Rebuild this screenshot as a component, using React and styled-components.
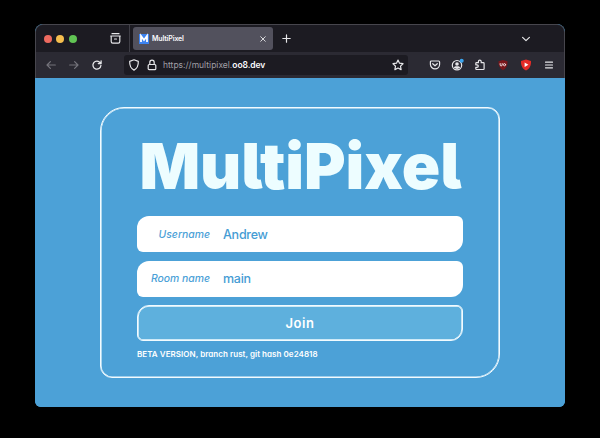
import React from "react";
import styled, { createGlobalStyle } from "styled-components";

const Global = createGlobalStyle`
  * { box-sizing: border-box; }
  html, body { margin: 0; background: #000; }
  body { font-family: Inter, "Liberation Sans", sans-serif; overflow: hidden; }
`;

const Desktop = styled.div`
  width: 600px;
  height: 438px;
  padding: 24px 35px 31px;
  background: #000;
`;
const Window = styled.div`
  height: 383px;
  border-radius: 8px 8px 6px 6px;
  overflow: hidden;
  display: flex;
  flex-direction: column;
  background: #4ca1d7;
`;
const Chrome = styled.div`
  height: 54px;
  border: 1px solid #47464d;
  border-bottom: 0;
  border-radius: 8px 8px 0 0;
  background: #2b2a33;
  overflow: hidden;
  color: #e8e8ea;
`;
const TabBar = styled.div`
  height: 27px;
  display: flex;
  align-items: center;
  background: #1c1b22;
  padding-left: 7.5px;
`;
const Lights = styled.div`
  display: flex;
  gap: 4.8px;
  margin-right: 32.5px;
`;
const Light = styled.span`
  width: 8px;
  height: 8px;
  border-radius: 50%;
  background: ${(p) => p.$color};
`;
const Divider = styled.span`
  width: 1px;
  height: 27px;
  margin: 0 3px 0 8.3px;
  background: #3f3e46;
`;
const Tab = styled.div`
  width: 140px;
  height: 23px;
  margin-right: 8.5px;
  padding: 0 5px 0 6px;
  display: flex;
  align-items: center;
  border-radius: 3px;
  background: #52515d;
`;
const TabTitle = styled.span`
  flex: 1;
  margin-left: 3px;
  font-size: 7px;
  font-weight: 600;
  letter-spacing: -0.12px;
  color: #fbfbfe;
`;
const Spacer = styled.span`
  flex: 1;
`;
const TabListSlot = styled.span`
  display: flex;
  margin-right: 32px;
`;
const Toolbar = styled.div`
  height: 26px;
  display: flex;
  align-items: center;
  padding: 0 8px;
`;
const NavButtons = styled.div`
  width: 80px;
  display: flex;
  gap: 9px;
`;
const UrlBar = styled.div`
  width: 284px;
  height: 20px;
  padding: 0 4px;
  display: flex;
  align-items: center;
  gap: 5.5px;
  border-radius: 3px;
  background: #1c1b22;
`;
const Url = styled.span`
  flex: 1;
  font-size: 8.5px;
  letter-spacing: 0;
  color: #a09fa6;
  white-space: nowrap;
`;
const Host = styled.span`
  color: #fbfbfe;
  font-weight: 600;
  letter-spacing: -0.08px;
`;
const Actions = styled.div`
  display: flex;
  flex: 1;
  justify-content: flex-end;
  gap: 8.9px;
`;
const Glyph = styled.svg`
  display: block;
  flex: none;
  overflow: visible;
  fill: none;
  stroke: ${(p) => p.$color || "#e6e6e9"};
  stroke-width: ${(p) => p.$weight || 1.2};
  stroke-linecap: round;
  stroke-linejoin: round;
`;

const Page = styled.main`
  flex: 1;
  display: flex;
  justify-content: center;
  align-items: flex-start;
  padding-top: 29px;
  background: #4ca1d7;
`;
const Card = styled.form`
  width: 400px;
  height: 271px;
  margin: 0;
  padding: 25px 36px 0;
  border: 1px solid #f2fbff;
  border-radius: 24px 12px 24px 12px;
  box-shadow: inset 0 0 0 0.6px #f2fbff;
`;
const Title = styled.h1`
  height: 83px;
  margin: 0 0 0 2.5px;
  font-size: 63.5px;
  line-height: 66px;
  font-weight: 900;
  font-feature-settings: "cv05" 1;
  letter-spacing: -0.1px;
  white-space: nowrap;
  color: #edfdff;
`;
const Fields = styled.div`
  display: flex;
  flex-direction: column;
  gap: 8.5px;
`;
const Field = styled.label`
  height: 36.2px;
  display: grid;
  grid-template-columns: 73px 1fr;
  column-gap: 13px;
  align-items: center;
  border-radius: 12px 6px 12px 6px;
  background: #fff;
  color: #4ca1d7;
`;
const Label = styled.span`
  text-align: right;
  font-size: 10.4px;
  font-weight: 500;
  font-style: italic;
  font-feature-settings: "cv11" 1;
  white-space: nowrap;
`;
const Value = styled.input`
  width: 220px;
  padding: 0;
  border: 0;
  outline: 0;
  background: transparent;
  color: #459cd4;
  font: 500 12.5px Inter, sans-serif;
  letter-spacing: -0.25px;
`;
const JoinButton = styled.button`
  height: 36px;
  padding: 0;
  border: 1px solid #f2fbff;
  border-radius: 12px 6px 12px 6px;
  box-shadow: inset 0 0 0 0.7px #f2fbff;
  background: #5eb0dd;
  color: #fff;
  font: 600 13px Inter, sans-serif;
  font-feature-settings: "cv11" 1;
  letter-spacing: 0.6px;
`;
const Version = styled.p`
  margin: 6.5px 0 0;
  font-size: 8px;
  line-height: 12px;
  font-weight: 600;
  font-feature-settings: "cv11" 1;
  letter-spacing: 0.05px;
  white-space: nowrap;
  color: #fff;
`;

function Archive() {
  return (
    <Glyph width="11" height="11" viewBox="0 0 11 11">
      <path d="M2 .7h7M.7 3h9.6M1.2 3v5.6q0 1.6 1.6 1.6h5.4q1.6 0 1.6-1.6V3M4.5 6h2" />
    </Glyph>
  );
}
function Favicon() {
  return (
    <Glyph width="10" height="10" viewBox="0 0 10 10">
      <rect width="10" height="10" fill="#3b82f0" stroke="none" />
      <path d="M2 8V2l3 4 3-4v6" stroke="#fff" strokeWidth="1.8" strokeLinejoin="miter" strokeLinecap="butt" />
    </Glyph>
  );
}
function Nav({ back }) {
  return (
    <Glyph width="14" height="10" viewBox="0 0 14 10" $color="#74737b">
      <path d={back ? "M11.3 5H3M6.4 1.6 3 5l3.4 3.4" : "M2.7 5H11M7.6 1.6 11 5 7.6 8.4"} />
    </Glyph>
  );
}
function Reload() {
  return (
    <Glyph width="14" height="10" viewBox="0 0 14 10" $weight={1.3}>
      <path d="M10.2 2.8A4 4 0 1 0 10.9 5.5M11.1.8v2.8H8.3" />
    </Glyph>
  );
}
function Shield() {
  return (
    <Glyph width="12" height="12" viewBox="0 0 12 12">
      <path d="M6 .8 10.3 2.4C10.5 6.6 9 9.6 6 11.1 3 9.6 1.5 6.6 1.7 2.4Z" />
    </Glyph>
  );
}
function Lock() {
  return (
    <Glyph width="12" height="12" viewBox="0 0 12 12">
      <rect x="2.2" y="5.5" width="7.6" height="5.2" rx="1" />
      <path d="M3.8 5.3V3.4a2.2 2.2 0 0 1 4.4 0v1.9" />
    </Glyph>
  );
}
function Star() {
  return (
    <Glyph width="12" height="12" viewBox="0 0 12 12">
      <path d="m6 1 1.5 3.2 3.5.5-2.5 2.4.6 3.5L6 9l-3.1 1.6.6-3.5L1 4.7l3.5-.5Z" />
    </Glyph>
  );
}
function Pocket() {
  return (
    <Glyph width="14" height="12" viewBox="0 0 14 12">
      <path d="M3.4 2h7.2q1 0 1 1v2.2a4.6 4.6 0 0 1-9.2 0V3q0-1 1-1ZM4.7 4.7 7 6.8l2.3-2.1" />
    </Glyph>
  );
}
function Account() {
  return (
    <Glyph width="14" height="12" viewBox="0 0 14 12">
      <circle cx="7" cy="6.2" r="4.7" />
      <circle cx="7" cy="5" r="1.8" fill="#e6e6e9" stroke="none" />
      <path d="M3.8 8.8q.5-1.5 1.7-1.5h3q1.2 0 1.7 1.5Q7 11 3.8 8.8Z" fill="#e6e6e9" stroke="none" />
      <circle cx="11.7" cy="1.8" r="2" fill="#3aa4ee" stroke="none" />
    </Glyph>
  );
}
function Puzzle() {
  return (
    <Glyph width="14" height="12" viewBox="0 0 14 12">
      <path d="M5.4 3.7V2.5a1.4 1.4 0 0 1 2.8 0v1.2h2.1q.8 0 .8.8v5.2q0 .8-.8.8H3.6q-.8 0-.8-.8V8.4H4a1.3 1.3 0 0 0 0-2.6H2.8V4.5q0-.8.8-.8Z" />
    </Glyph>
  );
}
function Blocker() {
  return (
    <Glyph width="14" height="12" viewBox="0 0 14 12">
      <path d="M7 .9 11.5 2.3C11.8 6.5 10.2 9.7 7 11.3 3.8 9.7 2.2 6.5 2.5 2.3Z" fill="#79171b" stroke="none" />
      <path d="M4.2 4.6v1.3q0 1 1 1t1-1V4.6" stroke="#f0e2e3" strokeWidth="1" />
      <circle cx="8.5" cy="5.7" r="1.1" stroke="#f0e2e3" strokeWidth="1" />
    </Glyph>
  );
}
function PlayShield() {
  return (
    <Glyph width="14" height="12" viewBox="0 0 14 12">
      <path d="M7 .6 12 2C12.2 6.6 10.7 9.7 7 11.5 3.3 9.7 1.8 6.6 2 2Z" fill="#e52b27" stroke="none" />
      <path d="m5.6 3.5 3.8 2.2-3.8 2.2Z" fill="#fff" stroke="none" />
    </Glyph>
  );
}
function Menu() {
  return (
    <Glyph width="14" height="12" viewBox="0 0 14 12" $weight={1.2}>
      <path d="M3.5 3.2h7M3.5 6h7M3.5 8.8h7" />
    </Glyph>
  );
}

export default function App() {
  return (
    <>
      <Global />
      <Desktop>
        <Window>
          <Chrome>
            <TabBar>
              <Lights>
                <Light $color="#ed6a5f" />
                <Light $color="#f5be4e" />
                <Light $color="#61c454" />
              </Lights>
              <Archive />
              <Divider />
              <Tab>
                <Favicon />
                <TabTitle>MultiPixel</TabTitle>
                <Glyph width="10" height="10" viewBox="0 0 10 10" $weight={0.9}>
                  <path d="m2.7 2.7 4.6 4.6m0-4.6L2.7 7.3" />
                </Glyph>
              </Tab>
              <Glyph width="11" height="11" viewBox="0 0 11 11">
                <path d="M5.5 1.8v7.4M1.8 5.5h7.4" />
              </Glyph>
              <Spacer />
              <TabListSlot>
                <Glyph width="12" height="10" viewBox="0 0 12 10">
                  <path d="m2.6 3.4 3.4 3.2 3.4-3.2" />
                </Glyph>
              </TabListSlot>
            </TabBar>
            <Toolbar>
              <NavButtons>
                <Nav back />
                <Nav />
                <Reload />
              </NavButtons>
              <UrlBar>
                <Shield />
                <Lock />
                <Url>
                  https://multipixel.<Host>oo8.dev</Host>
                </Url>
                <Star />
              </UrlBar>
              <Actions>
                <Pocket />
                <Account />
                <Puzzle />
                <Blocker />
                <PlayShield />
                <Menu />
              </Actions>
            </Toolbar>
          </Chrome>
          <Page>
            <Card onSubmit={(e) => e.preventDefault()}>
              <Title>MultiPixel</Title>
              <Fields>
                <Field>
                  <Label>Username</Label>
                  <Value defaultValue="Andrew" />
                </Field>
                <Field>
                  <Label>Room name</Label>
                  <Value defaultValue="main" />
                </Field>
                <JoinButton type="submit">Join</JoinButton>
              </Fields>
              <Version>BETA VERSION, branch rust, git hash 0e24818</Version>
            </Card>
          </Page>
        </Window>
      </Desktop>
    </>
  );
}
